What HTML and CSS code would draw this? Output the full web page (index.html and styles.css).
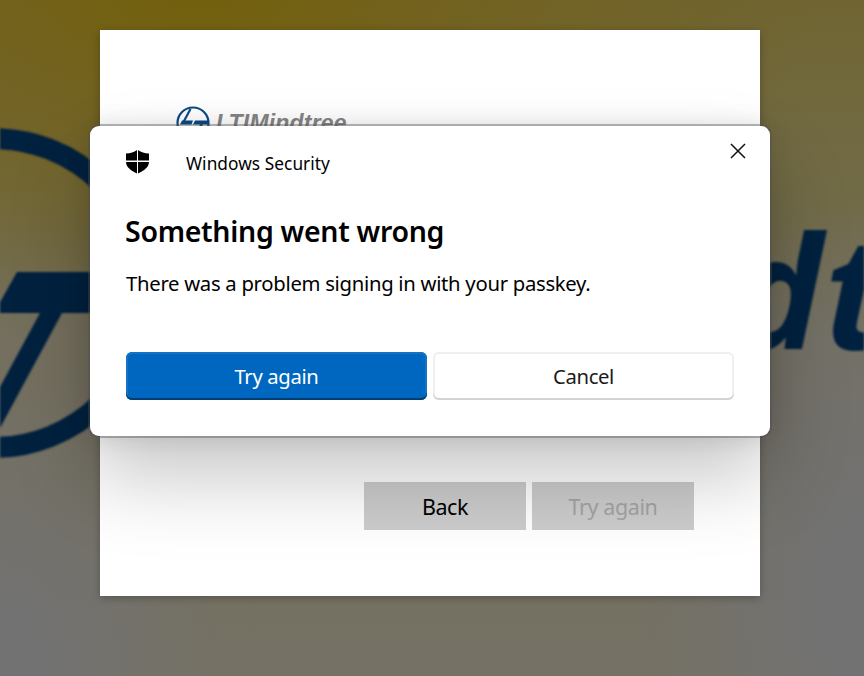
FILE: index.html
```html
<!DOCTYPE html>
<html lang="en">
<head>
<meta charset="utf-8">
<title>Windows Security</title>
<link rel="stylesheet" href="styles.css">
</head>
<body>
<svg class="backdrop" viewBox="0 0 864 676" aria-hidden="true">
  <g class="backdrop-mark">
    <circle class="ring" cx="-7" cy="293" r="154.5"/>
    <path d="M17 272H140V313H62L0 428L-20 465V424L0 387L40 313H-6Z"/>
    <text x="730" y="349">d</text><text x="824" y="349">t</text>
  </g>
</svg>
<main class="page">
  <section class="panel">
    <div class="brand">
      <svg class="brand-mark" viewBox="0 0 34 34" aria-hidden="true">
        <circle cx="17" cy="17" r="15.5"/>
        <path class="stroke" d="M14.500 3L7.500 16"/>
        <path d="M6 14.500H17L15.500 18.500H4ZM19 14.500H32V18.500H27L21 31H18L24 18.500H17Z"/>
      </svg>
      <span class="brand-name">LTIMindtree</span>
    </div>
    <div class="panel-actions">
      <button class="flat">Back</button>
      <button class="flat" disabled>Try again</button>
    </div>
  </section>
  <section class="dialog" role="dialog">
    <header class="dialog-head">
      <svg class="shield" viewBox="0 0 24 24" aria-hidden="true">
        <path d="M11 0V10.500H0V3.500C4.500 3.500 8 2.200 11 0ZM12 0C15 2.200 18.500 3.500 23 3.500V10.500H12V0ZM0 12H11V23.500C4 20 .3 17 0 12ZM12 12H23C22.700 17 19 20 12 23.500Z"/>
      </svg>
      <span class="app-name">Windows Security</span>
      <svg class="close" viewBox="0 0 16 16"><path d="M1 1L15 15M15 1L1 15"/></svg>
    </header>
    <h1>Something went wrong</h1>
    <p>There was a problem signing in with your passkey.</p>
    <div class="dialog-actions">
      <button class="primary">Try again</button>
      <button class="secondary">Cancel</button>
    </div>
  </section>
</main>
</body>
</html>
```
FILE: styles.css
```css
* { box-sizing: border-box; }
body {
  margin: 0;
  width: 864px;
  height: 676px;
  overflow: hidden;
  font-family: "Noto Sans", "Open Sans", sans-serif;
  color: #000;
  background:
    radial-gradient(ellipse 620px 340px at 200px -20px, #73600b 0%, #73611bcc 40%, #73611b00 100%),
    radial-gradient(ellipse 220px 300px at 0 676px, #727272 20%, #72727200 100%),
    radial-gradient(ellipse 220px 400px at 864px 600px, #727272 20%, #72727200 100%),
    linear-gradient(#706532 0, #716b48 30%, #746f5e 50%, #757164 100%);
}
.backdrop {
  position: absolute;
  inset: 0;
  width: 864px;
  height: 676px;
  filter: blur(1.2px);
}
.backdrop-mark { fill: #00213f; }
.backdrop-mark text { font-size: 156px; font-weight: 700; font-style: italic; }
.ring { fill: none; stroke: #00213f; stroke-width: 21; }
.page {
  position: relative;
  display: grid;
  grid-template-columns: 864px;
  grid-template-rows: 676px;
}
.panel, .dialog { grid-area: 1 / 1; justify-self: start; align-self: start; }
.panel {
  width: 660px;
  height: 566px;
  margin: 30px 0 0 100px;
  padding: 76px 66px 66px 76px;
  display: flex;
  flex-direction: column;
  justify-content: space-between;
  background: #fff;
  box-shadow: 0 2px 8px rgba(0, 0, 0, .25);
}
.brand { display: flex; gap: 6px; height: 34px; }
.brand-mark { width: 34px; height: 34px; fill: #0d4a86; }
.brand-mark circle, .brand-mark .stroke { fill: none; stroke: #0d4a86; stroke-width: 2.2; }
.brand-name {
  font-family: "Liberation Sans", sans-serif;
  font-size: 23px;
  line-height: 34px;
  font-weight: 700;
  font-style: italic;
  color: #858585;
  letter-spacing: .2px;
}
.panel-actions { display: flex; justify-content: flex-end; gap: 6px; }
button {
  font-family: inherit;
  padding: 0;
  border: 0;
  display: flex;
  align-items: center;
  justify-content: center;
}
.flat {
  width: 162px;
  height: 48px;
  font-size: 21.5px;
  letter-spacing: -.4px;
  background: #ccc;
  color: #000;
}
.flat:disabled { color: #a3a3a3; }
.dialog {
  width: 680px;
  height: 310px;
  margin: 126px 0 0 90px;
  padding: 16px 36px 36px;
  display: flex;
  flex-direction: column;
  background: #fff;
  border-radius: 9px;
  box-shadow:
    0 0 0 2px rgba(80, 80, 80, .4),
    0 0 24px rgba(0, 0, 0, .13),
    0 42px 80px rgba(0, 0, 0, .22);
}
.dialog-head { display: flex; height: 42px; align-items: center; }
.shield { width: 24px; height: 24px; margin-bottom: 2px; }
.app-name { margin-left: 36px; padding-top: 1px; font-size: 17.300px; line-height: 24px; letter-spacing: .05px; }
.close {
  width: 16px;
  height: 16px;
  margin: -25px -11.500px 0 auto;
  fill: none;
  stroke: #111;
  stroke-width: 1.5;
}
h1 {
  margin: 27px 0 0 -1px;
  font-size: 28.500px;
  line-height: 40px;
  font-weight: 600;
  letter-spacing: -.3px;
}
p { margin: 18px 0 0; font-size: 20.300px; line-height: 28px; letter-spacing: -.29px; white-space: nowrap; }
.dialog-actions { display: flex; gap: 6px; margin-top: auto; }
.dialog-actions button {
  flex: 1;
  height: 48px;
  border-radius: 6px;
  font-size: 20.300px;
  letter-spacing: -.35px;
}
.primary { color: #fff; background: #0067c0; box-shadow: inset 0 -2px #003e73, inset 0 0 0 2px #1473c5; }
.secondary { color: #1b1b1b; background: #fff; box-shadow: inset 0 -2px #d3d3d3, inset 0 0 0 2px #efefef; }
```
